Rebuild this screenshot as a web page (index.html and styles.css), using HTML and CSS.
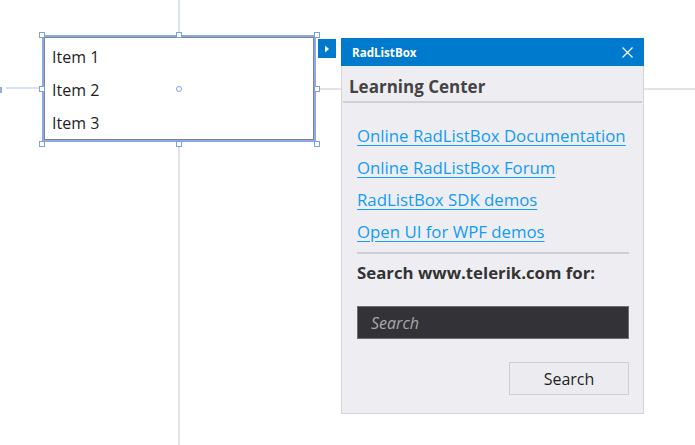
FILE: index.html
```html
<!DOCTYPE html>
<html lang="en">
<head>
    <meta charset="UTF-8">
    <meta name="viewport" content="width=device-width, initial-scale=1.0">
    <title> RadListBox Designer </title>

    <link rel="stylesheet" href="styles.css">
</head>
<body>

    <div class="surface">

        <!-- snap guides -->
        <div class="guide guide_top"></div>
        <div class="guide guide_bottom"></div>
        <div class="guide guide_left"></div>
        <div class="guide guide_right"></div>
        <div class="guide_tick"></div>

        <div class="selection">
            <ul class="listbox">
                <li>Item 1</li>
                <li>Item 2</li>
                <li>Item 3</li>
            </ul>
        </div>

        <div class="handle h_tl"></div>
        <div class="handle h_tm"></div>
        <div class="handle h_tr"></div>
        <div class="handle h_ml"></div>
        <div class="handle h_mr"></div>
        <div class="handle h_bl"></div>
        <div class="handle h_bm"></div>
        <div class="handle h_br"></div>
        <div class="center_dot"></div>

        <button class="smart_tag">
            <svg width="6" height="8" viewBox="0 0 6 8"><path d="M1 0.5 L5 4 L1 7.5 Z" fill="#fff"/></svg>
        </button>

        <div class="panel">

            <div class="panel_header">
                <span class="panel_title">RadListBox</span>
                <svg class="panel_close" width="11" height="11" viewBox="0 0 11 11">
                    <path d="M0.5 0.5 L10.5 10.5 M10.5 0.5 L0.5 10.5" stroke="#fff" stroke-width="1.2"/>
                </svg>
            </div>

            <div class="panel_section">Learning Center</div>

            <div class="panel_body">

                <div class="links">
                    <a href="#">Online RadListBox Documentation</a>
                    <a href="#">Online RadListBox Forum</a>
                    <a href="#">RadListBox SDK demos</a>
                    <a href="#">Open UI for WPF demos</a>
                </div>

                <div class="search_label">Search www.telerik.com for:</div>

                <input class="search_box" type="text" placeholder="Search">

                <div class="search_row">
                    <button class="search_button">Search</button>
                </div>

            </div>

        </div>

    </div>

</body>
</html>
```

FILE: styles.css
```css
body{
    margin: 0;
    background-color: white;
    font-family: "Open Sans", "Noto Sans", sans-serif;
}

.surface{
    position: relative;
    width: 695px;
    height: 445px;
    overflow: hidden;
    background-color: white;
}

.guide{
    position: absolute;
}

.guide_top{
    left: 178px;
    top: 0;
    width: 2px;
    height: 35px;
    background-color: #d6e3f8;
}

.guide_bottom{
    left: 178px;
    top: 142px;
    width: 2px;
    height: 303px;
    background-color: #e3e3e3;
}

.guide_left{
    left: 6px;
    top: 87px;
    width: 35px;
    height: 2px;
    background-color: #d6e3f8;
}

.guide_right{
    left: 317px;
    top: 88px;
    width: 378px;
    height: 2px;
    background-color: #e3e3e3;
}

.guide_tick{
    position: absolute;
    left: 0;
    top: 87px;
    width: 2px;
    height: 6px;
    background-color: #8faee9;
}

.selection{
    position: absolute;
    left: 42px;
    top: 35px;
    width: 270px;
    height: 103px;
    border: 2px solid #8aa8ec;
}

.listbox{
    list-style: none;
    margin: 0;
    padding: 3px 0 0 0;
    border: 1px solid #838383;
    background-color: white;
    box-sizing: border-box;
    height: 103px;
}

.listbox li{
    height: 33px;
    line-height: 33px;
    padding-left: 7px;
    font-size: 16px;
    color: #1e1e1e;
}

.handle{
    position: absolute;
    width: 4px;
    height: 4px;
    border: 1px solid #7d9fe8;
    background-color: white;
}

.h_tl{ left: 39px;  top: 32px; }
.h_tm{ left: 176px; top: 32px; }
.h_tr{ left: 314px; top: 32px; }
.h_ml{ left: 39px;  top: 86px; }
.h_mr{ left: 314px; top: 86px; }
.h_bl{ left: 39px;  top: 141px; }
.h_bm{ left: 176px; top: 141px; }
.h_br{ left: 314px; top: 141px; }

.center_dot{
    position: absolute;
    left: 176px;
    top: 86px;
    width: 4px;
    height: 4px;
    border: 1px solid #7d9fe8;
    border-radius: 50%;
    background-color: white;
}

.smart_tag{
    position: absolute;
    left: 318px;
    top: 39px;
    width: 18px;
    height: 19px;
    padding: 0;
    border: none;
    background-color: #007acc;
    display: flex;
    align-items: center;
    justify-content: center;
}

.panel{
    position: absolute;
    left: 341px;
    top: 38px;
    width: 303px;
    height: 376px;
    box-sizing: border-box;
    background-color: #eeeef2;
    border: 1px solid #d4d4dc;
    border-top: none;
}

.panel_header{
    margin: 0 -1px;
    height: 28px;
    background-color: #007acc;
    display: flex;
    align-items: center;
    justify-content: space-between;
    padding: 0 11px 0 11px;
}

.panel_title{
    color: white;
    font-size: 11.6px;
    font-weight: bold;
}

.panel_section{
    margin: 0 1px;
    height: 37px;
    box-sizing: border-box;
    padding: 4px 0 0 6px;
    line-height: 33px;
    font-size: 17px;
    font-weight: bold;
    color: #444444;
    border-bottom: 2px solid #d0d0da;
}

.panel_body{
    padding: 17px 14px 0 15px;
}

.links{
    display: flex;
    flex-direction: column;
    align-items: flex-start;
    padding-bottom: 4px;
    border-bottom: 2px solid #ccced8;
}

.links a{
    line-height: 32px;
    font-size: 16.8px;
    white-space: nowrap;
    color: #129cf3;
    text-decoration: underline;
    text-underline-offset: 3px;
}

.search_label{
    margin-top: 3px;
    line-height: 32px;
    font-size: 16.8px;
    font-weight: bold;
    color: #333333;
}

.search_box{
    display: block;
    margin-top: 17px;
    width: 100%;
    height: 33px;
    box-sizing: border-box;
    padding: 0 0 0 13px;
    border: 1px solid #6d6d72;
    background-color: #333337;
    color: white;
    font-family: "Open Sans", "Noto Sans", sans-serif;
    font-size: 16px;
    outline: none;
}

.search_box::placeholder{
    color: #a8a8ac;
    font-style: italic;
}

.search_row{
    display: flex;
    justify-content: flex-end;
    margin-top: 23px;
}

.search_button{
    width: 120px;
    height: 33px;
    border: 1px solid #ccced8;
    background-color: #ececf0;
    color: #1e1e1e;
    font-family: "Open Sans", "Noto Sans", sans-serif;
    font-size: 16px;
    padding: 0;
}
```
